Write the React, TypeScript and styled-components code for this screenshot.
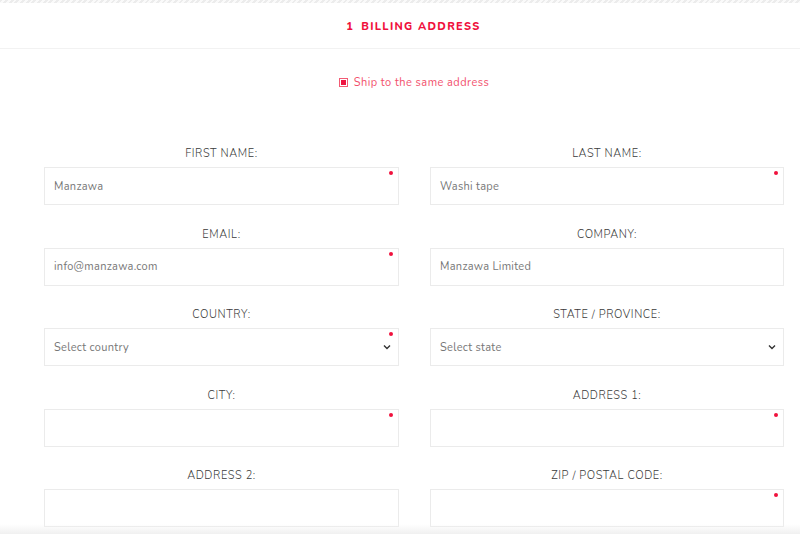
import styled, { createGlobalStyle } from "styled-components";

const GlobalStyle = createGlobalStyle`
  * { box-sizing: border-box; }
  body {
    margin: 0;
    background: #fff;
    font-family: "Nunito", Lato, "Open Sans", sans-serif;
  }
`;

type Field = {
  label: string;
  value?: string;
  required?: boolean;
  select?: boolean;
};

const fields: Field[] = [
  { label: "First name:", value: "Manzawa", required: true },
  { label: "Last name:", value: "Washi tape", required: true },
  { label: "Email:", value: "info@manzawa.com", required: true },
  { label: "Company:", value: "Manzawa Limited" },
  { label: "Country:", value: "Select country", required: true, select: true },
  { label: "State / Province:", value: "Select state", select: true },
  { label: "City:", required: true },
  { label: "Address 1:", required: true },
  { label: "Address 2:" },
  { label: "Zip / Postal code:", required: true },
];

const Chevron = () => (
  <svg width="8" height="6" viewBox="0 0 8 6" fill="none">
    <path d="M1 1.5 L4 4.5 L7 1.5" stroke="#333" strokeWidth="1.4" />
  </svg>
);

export default function App() {
  return (
    <>
      <GlobalStyle />
      <Page>
        <Stripe />
        <Header>
          <Title>
            <span>1</span>Billing address
          </Title>
        </Header>
        <ShipRow>
          <Check />
          <ShipLabel>Ship to the same address</ShipLabel>
        </ShipRow>
        <Form>
          {fields.map((f) => (
            <Group key={f.label}>
              <Label>{f.label}</Label>
              <Box>
                <Value>{f.value ?? ""}</Value>
                {f.select && (
                  <Arrow>
                    <Chevron />
                  </Arrow>
                )}
                {f.required && <Dot />}
              </Box>
            </Group>
          ))}
        </Form>
        <Fade />
      </Page>
    </>
  );
}

const Page = styled.div`
  position: relative;
  width: 800px;
  height: 534px;
  overflow: hidden;
  background: #fff;
`;

const Stripe = styled.div`
  height: 3px;
  background: repeating-linear-gradient(
    135deg,
    #ececec 0 2px,
    #fafafa 2px 4px
  );
`;

const Header = styled.div`
  height: 46px;
  display: flex;
  align-items: center;
  justify-content: center;
  border-bottom: 1px solid #f2f2f2;
`;

const Title = styled.h2`
  margin: 0 0 0 27px;
  padding-top: 1px;
  font-size: 11px;
  font-weight: 800;
  letter-spacing: 1.3px;
  text-transform: uppercase;
  color: #f0113d;

  span {
    margin-right: 7px;
  }
`;

const ShipRow = styled.div`
  display: flex;
  align-items: center;
  justify-content: center;
  gap: 6px;
  margin-top: 26px;
  margin-left: 28px;
`;

const Check = styled.span`
  width: 9px;
  height: 9px;
  border: 1px solid #f25b74;
  display: flex;
  align-items: center;
  justify-content: center;

  &::after {
    content: "";
    width: 5px;
    height: 5px;
    background: #ee1340;
  }
`;

const ShipLabel = styled.span`
  font-size: 11px;
  letter-spacing: 0.45px;
  color: #f2506c;
`;

const Form = styled.div`
  display: grid;
  grid-template-columns: 355px 354px;
  column-gap: 31px;
  row-gap: 22.5px;
  padding: 57px 16px 0 44px;
`;

const Group = styled.div`
  display: flex;
  flex-direction: column;
  align-items: stretch;
`;

const Label = styled.label`
  text-align: center;
  font-size: 11px;
  font-weight: 300;
  letter-spacing: 0.6px;
  text-transform: uppercase;
  color: #3a3a3a;
  line-height: 14px;
  margin-bottom: 6px;
`;

const Box = styled.div`
  position: relative;
  height: 38px;
  border: 1px solid #ebebeb;
  display: flex;
  align-items: center;
  padding: 0 10px 0 9px;
`;

const Value = styled.span`
  flex: 1;
  font-size: 11px;
  letter-spacing: 0.3px;
  color: #777;
`;

const Arrow = styled.span`
  display: flex;
  align-items: center;
  margin-right: -3px;
`;

const Dot = styled.span`
  position: absolute;
  top: 3px;
  right: 5px;
  width: 4px;
  height: 4px;
  border-radius: 50%;
  background: #f0113d;
`;

const Fade = styled.div`
  position: absolute;
  left: 0;
  right: 0;
  bottom: 0;
  height: 10px;
  background: linear-gradient(to bottom, rgba(240, 240, 240, 0), #f0f0f0);
`;
